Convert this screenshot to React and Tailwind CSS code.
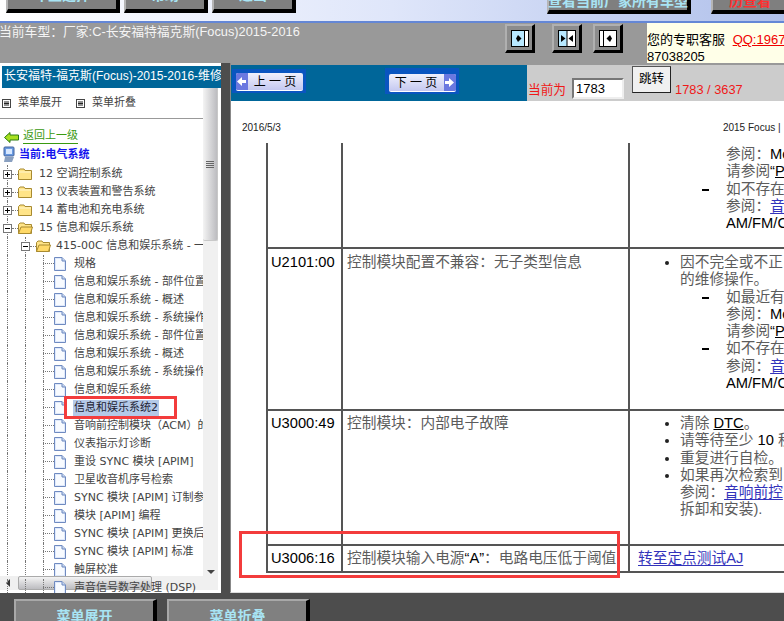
import React from "react";

const sans = "font-['Liberation_Sans','Noto_Sans_CJK_SC',sans-serif]";
const tree = "font-['DejaVu_Sans','Noto_Sans_CJK_SC',sans-serif]";

function TopBtn({ w, ml, mb, textMb, text, red }) {
  return (
    <div
      className={`${w} ${ml} ${mb} h-[34px] shrink-0 flex items-end justify-center bg-[#7f7f7f] border-l-2 border-[#b5b5b5] border-b-4 border-b-black border-r-4 border-r-black`}
    >
      <span className={`text-[14px] font-bold leading-[16px] whitespace-nowrap ${textMb} ${red ? "text-[#ff3030]" : "text-[#a8e4f4]"}`}>
        {text}
      </span>
    </div>
  );
}

function Screen({ type }) {
  return (
    <svg width="18" height="17" viewBox="0 0 18 17">
      <rect x="0.5" y="0.5" width="17" height="16" fill="#fff" stroke="#000" />
      {type === "left" && (
        <>
          <rect x="1" y="1" width="12" height="15" fill="#b8e8ff" />
          <path d="M13.5 1V16" stroke="#000" />
          <path d="M7 5L10.5 8.5L7 12L5 8.5Z" fill="#000" />
        </>
      )}
      {type === "both" && (
        <>
          <rect x="1" y="1" width="8" height="15" fill="#b8e8ff" />
          <path d="M9 1V16" stroke="#000" />
          <path d="M3 5L7.5 8.5L3 12Z" fill="#000" />
          <path d="M15 5L10.5 8.5L15 12Z" fill="#000" />
        </>
      )}
      {type === "right" && (
        <>
          <path d="M4.5 1V16" stroke="#000" />
          <path d="M11 5L7.5 8.5L11 12L13 8.5Z" fill="#000" />
        </>
      )}
    </svg>
  );
}

function ScreenBtn({ type, className }) {
  return (
    <div className={`${className} w-[30px] h-[29px] shrink-0 flex items-center justify-center bg-[#8c8c8c] border-t-2 border-l-2 border-[#b0b0b0] border-b-[3px] border-b-black border-r-[3px] border-r-black`}>
      <Screen type={type} />
    </div>
  );
}

function MenuIcon() {
  return (
    <svg width="9" height="9" viewBox="0 0 9 9" className="shrink-0">
      <rect x="0.5" y="0.5" width="8" height="8" fill="#fff" stroke="#444" />
      <path d="M2 3H7M2 4.5H7M2 6H7" stroke="#222" />
    </svg>
  );
}

function Box({ open }) {
  return (
    <svg width="9" height="9" viewBox="0 0 9 9" className="shrink-0 bg-white">
      <rect x="0.5" y="0.5" width="8" height="8" fill="#fff" stroke="#777" />
      <path d="M2 4.5H7" stroke="#000" />
      {!open && <path d="M4.5 2V7" stroke="#000" />}
    </svg>
  );
}

function Folder({ open }) {
  return (
    <svg width="15" height="13" viewBox="0 0 15 13" className="shrink-0">
      <path d="M0.5 2.5L2 1H6L7 2.5H13.5V11.5H0.5Z" fill="#ffe488" stroke="#a88a30" />
      {open && <path d="M0.5 11.5L3 5H14.5L12.5 11.5Z" fill="#ffd968" stroke="#a88a30" />}
      {!open && <path d="M1 4H13" stroke="#fff6cf" />}
    </svg>
  );
}

function Doc() {
  return (
    <svg width="12" height="14" viewBox="0 0 12 14" className="shrink-0">
      <path d="M0.5 0.5H8L11.5 4V13.5H0.5Z" fill="#dfe9fb" stroke="#6f8ac0" />
      <path d="M2 2V12H10V5L7 2Z" fill="#f8fbff" />
      <path d="M8 0.5V4H11.5" fill="#c6d6f0" stroke="#6f8ac0" />
    </svg>
  );
}

function Guide() {
  return <span className="block ml-[7px] w-[11px] h-full shrink-0 border-l border-dotted border-[#777]" />;
}

function Level1({ label, open }) {
  return (
    <div className="relative flex items-center h-[18px]">
      <Guide />
      <div className="absolute left-[3px] top-[1px] flex items-center">
        <Box open={open} />
        <span className="w-[6px] border-t border-dotted border-[#777]" />
        <Folder open={open} />
        <span className="ml-[6px] whitespace-nowrap">{label}</span>
      </div>
    </div>
  );
}

function Level2({ label }) {
  return (
    <div className="relative flex items-center h-[18px]">
      <Guide />
      <Guide />
      <div className="absolute left-[21px] top-[1px] flex items-center">
        <Box open />
        <span className="w-[6px] border-t border-dotted border-[#777]" />
        <Folder open />
        <span className="ml-[5px] whitespace-nowrap">{label}</span>
      </div>
    </div>
  );
}

function Leaf({ label, selected }) {
  return (
    <div className="flex items-center h-[18px]">
      <Guide />
      <Guide />
      <Guide />
      <span className="-ml-[11px] w-[11px] h-[9px] self-start shrink-0 border-b border-dotted border-[#777]" />
      <Doc />
      <span className={`ml-[7px] pl-[1px] pr-[1px] whitespace-nowrap leading-[16px] ${selected ? "bg-[#b4c9e8] text-[#223]" : ""}`}>{label}</span>
    </div>
  );
}

function PageBtn({ label, next, className }) {
  const arrow = (
    <span className="w-[12px] h-[17px] bg-[#6a78e0] flex items-center justify-center shrink-0">
      <svg width="9" height="9" viewBox="0 0 9 9">
        {next ? <path d="M0 3H4V0L9 4.5L4 9V6H0Z" fill="#fff" /> : <path d="M9 3H5V0L0 4.5L5 9V6H9Z" fill="#fff" />}
      </svg>
    </span>
  );
  return (
    <div className={`${className} w-[74px] shrink-0 flex items-end justify-center pb-[2px] bg-[#0a55c0]`}>
      <div className="w-[67px] h-[18px] flex items-center rounded-[2px] overflow-hidden bg-gradient-to-b from-[#f0f0fc] to-[#c4c8f0] border-b border-white">
        {!next && arrow}
        <span className="flex-1 text-center text-[12px] text-black whitespace-nowrap">{label}</span>
        {next && arrow}
      </div>
    </div>
  );
}

const Blk = ({ children }) => <span className="text-black">{children}</span>;
const Lnk = ({ children }) => <span className="text-[#3333bb] underline underline-offset-2">{children}</span>;

function L({ x, dash, bullet, children }) {
  return (
    <div className={`relative h-[17.3px] leading-[17.3px] whitespace-nowrap ${x}`}>
      {dash && <span className="absolute -left-[24px] top-[8px] w-[7px] h-[2px] bg-black" />}
      {bullet && <span className="absolute -left-[15px] top-[7px] w-[4px] h-[4px] rounded-full bg-[#222]" />}
      {children}
    </div>
  );
}

function Row({ h, code, desc, pt, children }) {
  return (
    <div className={`flex ${h} border-b-2 border-[#555]`}>
      <div className={`w-[73px] shrink-0 pl-[3px] leading-[17.3px] text-black ${pt}`}>{code}</div>
      <div className={`w-[287px] shrink-0 border-l-2 border-[#555] pl-[4px] leading-[17.3px] whitespace-nowrap ${pt}`}>{desc}</div>
      <div className={`flex-1 border-l-2 border-[#555] ${pt}`}>{children}</div>
    </div>
  );
}

export default function App() {
  return (
    <div className={`${sans} relative w-[784px] h-[621px] overflow-hidden flex flex-col bg-[#4d4d4d]`}>
      {/* top strip */}
      <div className="h-[21px] shrink-0 flex items-end overflow-hidden bg-gradient-to-r from-white via-[#dfe6fa] to-[#b0c0ea]">
        <TopBtn w="w-[114px]" ml="ml-[6px]" mb="mb-[8px]" textMb="mb-[6px]" text="车型选择" />
        <TopBtn w="w-[84px]" ml="ml-[4px]" mb="mb-[8px]" textMb="mb-[6px]" text="帮助" />
        <TopBtn w="w-[84px]" ml="ml-[4px]" mb="mb-[8px]" textMb="mb-[6px]" text="退出" />
        <span className="ml-[34px] mb-[9px] w-[3px] h-[1px] bg-[#2060d0]" />
        <TopBtn w="w-[144px]" ml="ml-[217px]" mb="mb-[7px]" textMb="mb-[1px]" text="查看当前厂家所有车型" />
        <TopBtn w="w-[80px]" ml="ml-[20px]" mb="mb-[7px]" textMb="mb-[1px]" text="历查看" red />
      </div>
      <div className="h-[2px] shrink-0 bg-[#6487d6]" />

      {/* car model bar */}
      <div className="h-[40px] shrink-0 flex bg-[#999999]">
        <div className="w-[505px] shrink-0 -ml-[1px] pt-[1px] text-[12.8px] leading-[15px] text-[#f4f4f4] whitespace-nowrap">
          当前车型：厂家:C-长安福特福克斯(Focus)2015-2016
        </div>
        <ScreenBtn type="left" className="ml-[1px] mt-[1px]" />
        <ScreenBtn type="both" className="ml-[17px] mt-[1px]" />
        <ScreenBtn type="right" className="ml-[11px] mt-[1px]" />
        <div className="ml-[24px] flex-1 bg-[#ffffe8] pt-[8px] text-[13px] leading-[17px] text-black overflow-hidden whitespace-nowrap">
          <div>
            您的专职客服 <span className="ml-[4px] text-[#f00000] underline">QQ:196759</span>
          </div>
          <div>87038205</div>
        </div>
      </div>

      {/* main */}
      <div className="h-[530px] shrink-0 flex">
        <div className="w-[221px] shrink-0 h-[530px] bg-white flex flex-col overflow-hidden">
          <div className="mt-[3px] ml-[2px] h-[22px] shrink-0 bg-[#006699] pl-[2px] text-[12px] leading-[21px] text-white whitespace-nowrap overflow-hidden">
            长安福特-福克斯(Focus)-2015-2016-维修
          </div>
          <div className="relative flex-1 flex min-h-0">
            <div className={`${tree} w-[203px] shrink-0 text-[11px] text-[#444] overflow-hidden`}>
              <div className="h-[31px] border-b border-[#999] flex items-center pl-[2px]">
                <MenuIcon />
                <span className="ml-[7px]">菜单展开</span>
                <span className="ml-[14px]"><MenuIcon /></span>
                <span className="ml-[7px]">菜单折叠</span>
              </div>
              <div className="h-[25px] flex items-end pl-[4px] text-[#3a9a10]">
                <svg width="15" height="11" viewBox="0 0 15 11" className="mb-[1px]">
                  <path d="M0.5 5.5L6 0.5V3H14.5V8H6V10.5Z" fill="#a8e020" stroke="#2a7a10" />
                </svg>
                <span className="ml-[4px] border-b border-[#3a9a10] leading-[14px]">返回上一级</span>
              </div>
              <div className="h-[21px] flex items-center pl-[3px] pt-[2px] font-bold text-[#1414ee]">
                <svg width="12" height="17" viewBox="0 0 12 17" className="shrink-0 -mt-[2px]">
                  <rect x="1" y="1" width="10" height="9" rx="1" fill="#6a9ae0" stroke="#44659c" />
                  <rect x="3" y="3" width="6" height="5" fill="#d8e8ff" />
                  <path d="M2 11H11L9 16H1Z" fill="#8aa0c0" />
                </svg>
                <span className="ml-[4px]">当前:电气系统</span>
              </div>
              <Level1 label="12 空调控制系统" />
              <Level1 label="13 仪表装置和警告系统" />
              <Level1 label="14 蓄电池和充电系统" />
              <Level1 label="15 信息和娱乐系统" open />
              <Level2 label="415-00C 信息和娱乐系统 - 一般信息" />
              <Leaf label="规格" />
              <Leaf label="信息和娱乐系统 - 部件位置" />
              <Leaf label="信息和娱乐系统 - 概述" />
              <Leaf label="信息和娱乐系统 - 系统操作" />
              <Leaf label="信息和娱乐系统 - 部件位置" />
              <Leaf label="信息和娱乐系统 - 概述" />
              <Leaf label="信息和娱乐系统 - 系统操作" />
              <Leaf label="信息和娱乐系统" />
              <Leaf label="信息和娱乐系统2" selected />
              <Leaf label="音响前控制模块（ACM）的" />
              <Leaf label="仪表指示灯诊断" />
              <Leaf label="重设 SYNC 模块 [APIM]" />
              <Leaf label="卫星收音机序号检索" />
              <Leaf label="SYNC 模块 [APIM] 订制参数" />
              <Leaf label="模块 [APIM] 编程" />
              <Leaf label="SYNC 模块 [APIM] 更换后" />
              <Leaf label="SYNC 模块 [APIM] 标准" />
              <Leaf label="触屏校准" />
              <div className="relative z-10">
                <Leaf label="声音信号数字处理 (DSP)" />
              </div>
            </div>
            {/* vertical scrollbar */}
            <div className="w-[15px] shrink-0 mb-[14px] bg-[#f0f0f0] flex flex-col">
              <div className="h-[153px] shrink-0 rounded-b-[2px] bg-gradient-to-r from-[#f4f4f4] to-[#bcbcc0] border-r border-b border-[#c8c8c8] flex flex-col items-center justify-center gap-[1px]">
                <span className="w-[8px] h-[1px] bg-[#666]" />
                <span className="w-[8px] h-[1px] bg-[#666]" />
                <span className="w-[8px] h-[1px] bg-[#666]" />
                <span className="w-[8px] h-[1px] bg-[#666]" />
              </div>
              <div className="mt-auto mb-[5px] mx-auto w-0 h-0 border-l-[4px] border-r-[4px] border-t-[4px] border-l-transparent border-r-transparent border-t-[#444]" />
            </div>
            {/* horizontal scrollbar lies over the tree */}
            <div className="absolute left-0 bottom-[3px] w-[218px] h-[14px] bg-[#f0f0f0] flex items-center">
              <span className="ml-[6px] w-0 h-0 border-t-[4px] border-b-[4px] border-r-[4px] border-t-transparent border-b-transparent border-r-[#333]" />
              <span className="ml-[8px] w-[134px] h-[14px] rounded-[2px] bg-gradient-to-b from-[#f4f4f4] to-[#bcbcc0] border border-[#aaa]" />
            </div>
          </div>
        </div>

        <div className="w-[9px] shrink-0" />

        <div className="flex-1 min-w-0 h-[530px] bg-white border-b border-[#ddd] border-l border-l-[#888] flex flex-col overflow-hidden">
          {/* pager */}
          <div className="h-[38px] shrink-0 border-t-2 border-[#999] flex bg-[#006699]">
            <PageBtn label="上 一 页" className="ml-[1px] mt-[4px] h-[24px]" />
            <PageBtn label="下 一 页" next className="ml-[79px] mt-[3px] h-[26px]" />
            <div className="ml-[68px] flex-1 bg-[#cccccc] relative text-[12.8px] text-[#f01818] whitespace-nowrap overflow-hidden flex items-end pb-[3px]">
              <span className="ml-[1px] text-[12.7px] leading-[16px]">当前为</span>
              <input
                readOnly
                value="1783"
                className="ml-[6px] mb-[-1px] w-[52px] h-[21px] bg-white border-2 border-t-[#777] border-l-[#777] border-r-[#eee] border-b-[#eee] pl-[2px] text-[13px] text-black outline-none"
              />
              <button className="ml-[8px] mb-[5px] w-[39px] h-[27px] bg-[#f0f0f0] border border-t-[#555] border-l-[#555] border-r-[#222] border-b-[#222] text-[12.5px] text-black">
                跳转
              </button>
              <span className="ml-[4px] leading-[16px]">1783 / 3637</span>
            </div>
          </div>
          {/* page header */}
          <div className="h-[42px] shrink-0 flex items-start pt-[21px] text-[10px] leading-[12px] text-[#222] whitespace-nowrap">
            <span className="ml-[11px]">2016/5/3</span>
            <span className="ml-[442px]">2015 Focus |</span>
          </div>
          {/* table */}
          <div className="ml-[35px] w-[600px] border-l-2 border-[#555] text-[14.7px] text-[#5c5c5c]">
            <Row h="h-[106px]" pt="pt-[3px]" code="" desc="">
              <L x="ml-[96px]">参阅：<Blk>Mo</Blk></L>
              <L x="ml-[96px]">请参阅<Blk>“<span className="underline">P</span></Blk></L>
              <L x="ml-[96px]" dash>如不存在</L>
              <L x="ml-[96px]">参阅：<Lnk>音</Lnk></L>
              <L x="ml-[96px]"><Blk>AM/FM/C</Blk></L>
            </Row>
            <Row h="h-[162px]" pt="pt-[5px]" code="U2101:00" desc="控制模块配置不兼容：无子类型信息">
              <L x="ml-[50px]" bullet>因不完全或不正</L>
              <L x="ml-[50px]">的维修操作。</L>
              <L x="ml-[96px]" dash>如最近有</L>
              <L x="ml-[96px]">参阅：<Blk>Mo</Blk></L>
              <L x="ml-[96px]">请参阅<Blk>“<span className="underline">P</span></Blk></L>
              <L x="ml-[96px]" dash>如不存在</L>
              <L x="ml-[96px]">参阅：<Lnk>音</Lnk></L>
              <L x="ml-[96px]"><Blk>AM/FM/C</Blk></L>
            </Row>
            <Row h="h-[135px]" pt="pt-[4px]" code="U3000:49" desc="控制模块：内部电子故障">
              <L x="ml-[50px]" bullet>清除 <Blk><span className="underline">DTC</span></Blk>。</L>
              <L x="ml-[50px]" bullet>请等待至少 <Blk>10</Blk> 秒</L>
              <L x="ml-[50px]" bullet>重复进行自检。</L>
              <L x="ml-[50px]" bullet>如果再次检索到</L>
              <L x="ml-[50px]">参阅：<Lnk>音响前控</Lnk></L>
              <L x="ml-[50px]">拆卸和安装).</L>
            </Row>
            <Row h="h-[27px]" pt="pt-[4px]" code="U3006:16" desc={<>控制模块输入电源<Blk>“A”</Blk>：电路电压低于阈值</>}>
              <div className="ml-[8px] leading-[17.3px] whitespace-nowrap"><Lnk>转至定点测试AJ</Lnk></div>
            </Row>
          </div>
        </div>
      </div>

      {/* footer */}
      <div className="flex-1 flex bg-[#4d4d4d] pt-[6px] overflow-hidden">
        <div className="ml-[14px] w-[143px] h-[30px] shrink-0 flex justify-center bg-[#808080] border-t-2 border-l-2 border-[#a8a8a8] border-r-4 border-r-black pt-[5px] text-[14px] font-bold text-[#a8e4f4]">菜单展开</div>
        <div className="ml-[10px] w-[143px] h-[30px] shrink-0 flex justify-center bg-[#808080] border-t-2 border-l-2 border-[#a8a8a8] border-r-4 border-r-black pt-[5px] text-[14px] font-bold text-[#a8e4f4]">菜单折叠</div>
      </div>

      {/* red annotation boxes */}
      <div className="absolute left-[64px] top-[396px] w-[113px] h-[23px] border-[3px] border-[#f33c3c] pointer-events-none" />
      <div className="absolute left-[239px] top-[531px] w-[381px] h-[47px] border-[3px] border-[#f33c3c] pointer-events-none" />
    </div>
  );
}
